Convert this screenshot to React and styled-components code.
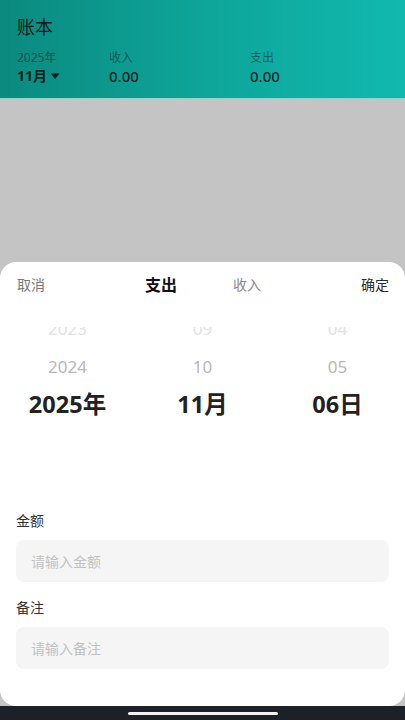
import React from "react";
import styled, { createGlobalStyle } from "styled-components";

const Global = createGlobalStyle`
  html, body { margin: 0; padding: 0; }
  body {
    width: 405px;
    height: 720px;
    overflow: hidden;
    font-family: "Noto Sans", "Noto Sans CJK SC", sans-serif;
    background: #ffffff;
  }
  * { box-sizing: border-box; }
`;

const Screen = styled.div`
  width: 405px;
  height: 720px;
  display: flex;
  flex-direction: column;
`;

const Header = styled.header`
  height: 99px;
  flex-shrink: 0;
  padding: 16px 17px 0;
  background: linear-gradient(90deg, #0b8a7f 0%, #0ea79c 55%, #11b8ae 100%);
  border-bottom: 1px solid #93d3cc;
`;

const Title = styled.h1`
  margin: 0;
  font-size: 18px;
  line-height: 23px;
  font-weight: 400;
  color: #141a19;
`;

const Stats = styled.div`
  margin-top: 10px;
  display: grid;
  grid-template-columns: 92px 141px 1fr;
`;

const Stat = styled.div`
  display: flex;
  flex-direction: column;
`;

const StatLabel = styled.span`
  font-size: 12px;
  line-height: 17px;
  color: rgba(0, 0, 0, 0.45);
`;

const StatValue = styled.span`
  display: flex;
  align-items: center;
  gap: 3px;
  font-size: ${(p) => (p.$month ? "14px" : "15px")};
  line-height: 20px;
  font-weight: ${(p) => (p.$month ? 700 : 500)};
  color: rgba(0, 0, 0, 0.78);
`;

const Backdrop = styled.div`
  flex: 1;
  background: #c4c4c4;
  display: flex;
  flex-direction: column;
  justify-content: flex-end;
`;

const Sheet = styled.div`
  height: 444px;
  background: #ffffff;
  border-radius: 16px;
  display: flex;
  flex-direction: column;
`;

const Toolbar = styled.div`
  height: 44px;
  padding: 0 16px 0 17px;
  display: grid;
  grid-template-columns: 1fr auto 1fr;
  align-items: center;
`;

const ToolText = styled.span`
  font-size: 14px;
  color: ${(p) => (p.$strong ? "#2a2a2a" : "#777")};
  justify-self: ${(p) => (p.$end ? "end" : "start")};
`;

const Tabs = styled.div`
  display: flex;
  gap: 56px;
  align-items: center;
`;

const Tab = styled.span`
  font-size: ${(p) => (p.$active ? "16px" : "14px")};
  font-weight: ${(p) => (p.$active ? 700 : 400)};
  color: ${(p) => (p.$active ? "#111" : "#888")};
`;

const Picker = styled.div`
  margin-top: 21px;
  height: 184px;
  overflow: hidden;
  display: grid;
  grid-template-columns: repeat(3, 1fr);
`;

const Wheel = styled.div`
  margin-top: -18px;
  display: flex;
  flex-direction: column;
  align-items: center;
`;

const WheelItem = styled.div`
  height: ${(p) => (p.$level === 0 ? "36px" : "38px")};
  display: flex;
  align-items: center;
  justify-content: center;
  font-size: ${(p) => (p.$level === 0 ? "23.5px" : "17px")};
  font-weight: ${(p) => (p.$level === 0 ? 700 : 400)};
  color: ${(p) =>
    p.$level === 0 ? "#222" : p.$level === 1 ? "#b8b8b8" : "#e2e2e2"};
`;

const Form = styled.div`
  padding: 0 16px 37px;
  display: flex;
  flex-direction: column;
`;

const Label = styled.div`
  font-size: 14px;
  line-height: 20px;
  color: #333;
  margin-top: ${(p) => (p.$first ? "0" : "16px")};
`;

const Input = styled.input`
  margin-top: 9px;
  height: 42px;
  width: 100%;
  border: none;
  outline: none;
  border-radius: 8px;
  background: #f5f5f5;
  padding: 0 15px;
  font-family: inherit;
  font-size: 14px;
  color: #333;
  &::placeholder { color: #c2c2c2; }
`;

const NavBar = styled.div`
  height: 14px;
  flex-shrink: 0;
  background: #1c2128;
  display: flex;
  align-items: center;
  justify-content: center;
`;

const HomeIndicator = styled.div`
  width: 150px;
  height: 3px;
  border-radius: 2px;
  background: #f2f2f2;
`;

const Caret = () => (
  <svg width="10" height="7" viewBox="0 0 10 7">
    <path d="M0.5 0.5 H9.5 L5 6 Z" fill="rgba(0,0,0,0.78)" />
  </svg>
);

const wheels = [
  ["2023", "2024", "2025年"],
  ["09", "10", "11月"],
  ["04", "05", "06日"],
];

export default function App() {
  return (
    <Screen>
      <Global />
      <Header>
        <Title>账本</Title>
        <Stats>
          <Stat>
            <StatLabel>2025年</StatLabel>
            <StatValue $month>
              11月
              <Caret />
            </StatValue>
          </Stat>
          <Stat>
            <StatLabel>收入</StatLabel>
            <StatValue>0.00</StatValue>
          </Stat>
          <Stat>
            <StatLabel>支出</StatLabel>
            <StatValue>0.00</StatValue>
          </Stat>
        </Stats>
      </Header>
      <Backdrop>
        <Sheet>
          <Toolbar>
            <ToolText>取消</ToolText>
            <Tabs>
              <Tab $active>支出</Tab>
              <Tab>收入</Tab>
            </Tabs>
            <ToolText $strong $end>
              确定
            </ToolText>
          </Toolbar>
          <Picker>
            {wheels.map((items, i) => (
              <Wheel key={i}>
                {items.map((t, j) => (
                  <WheelItem key={t} $level={2 - j}>
                    {t}
                  </WheelItem>
                ))}
              </Wheel>
            ))}
          </Picker>
          <Form>
            <Label $first>金额</Label>
            <Input placeholder="请输入金额" />
            <Label>备注</Label>
            <Input placeholder="请输入备注" />
          </Form>
        </Sheet>
      </Backdrop>
      <NavBar>
        <HomeIndicator />
      </NavBar>
    </Screen>
  );
}
